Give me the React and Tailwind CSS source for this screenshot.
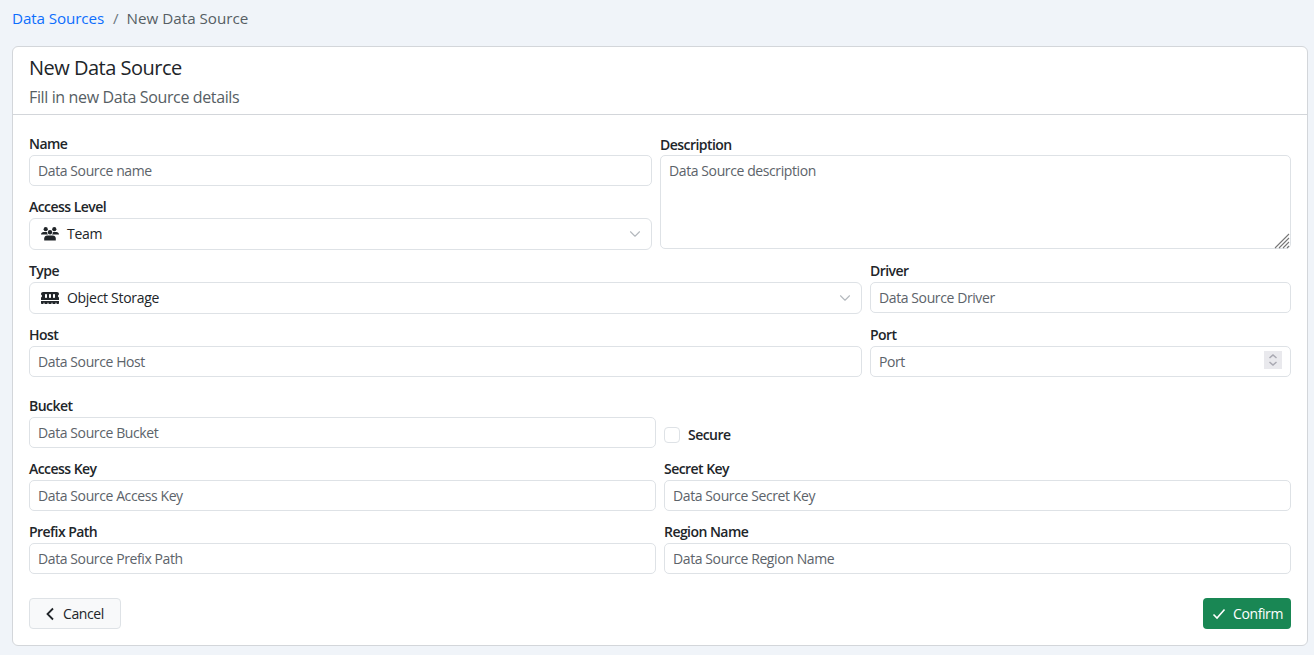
import React from 'react';
import { FaMemory } from 'react-icons/fa6';

const labelClass = 'block text-[14px] leading-[19px] pb-[2px] font-semibold text-[#212529] tracking-[-0.55px]';
const inputClass = 'block w-full h-[31px] border border-[#dee2e6] rounded-[5px] bg-white px-2 text-[14px] tracking-[-0.4px] text-[#212529] placeholder:text-[#5c636a] placeholder:opacity-100 outline-none';
const selectClass = 'relative flex items-center w-full h-[32px] border border-[#dee2e6] rounded-[6px] bg-white text-[14px] tracking-[-0.3px] text-[#212529]';

const Field = ({ label, placeholder, className = '' }) => (
  <div className={className}>
    <label className={labelClass}>{label}</label>
    <input type="text" placeholder={placeholder} className={inputClass} />
  </div>
);

const Chevron = () => (
  <svg className="absolute right-[10px] top-[9px]" width="12" height="12" viewBox="0 0 16 16" fill="none" stroke="#b4b9be" strokeWidth="1.5" strokeLinecap="round" strokeLinejoin="round">
    <path d="M2 5l6 6 6-6" />
  </svg>
);

const TeamIcon = () => (
  <svg width="18" height="14" viewBox="0 0 18 14" fill="currentColor">
    <circle cx="4.7" cy="2.2" r="2.1" />
    <circle cx="13.3" cy="2.2" r="2.1" />
    <circle cx="9" cy="5.2" r="2.2" />
    <path d="M0 7.5C0 5.8 1.2 4.9 2.6 4.9h3.2c.3 1 .7 1.8 1.2 2.6H0zM18 7.5c0-1.7-1.2-2.6-2.6-2.6h-3.2c-.3 1-.7 1.8-1.2 2.6H18z" />
    <path d="M3.2 13.6v-2c0-1.9 1.4-3.1 3-3.1h5.6c1.6 0 3 1.2 3 3.1v2H3.2z" />
  </svg>
);

const SelectField = ({ label, icon, value, className = '' }) => (
  <div className={className}>
    <label className={labelClass}>{label}</label>
    <div className={selectClass}>
      <span className="w-[37px] flex justify-center pl-[3px] -mt-[1px] text-[#212529]">{icon}</span>
      <span className="-mt-[2px]">{value}</span>
      <Chevron />
    </div>
  </div>
);

export default function App() {
  return (
    <div className="min-h-[655px] bg-[#f0f4f9] px-3 pb-[10px] font-['Open_Sans','Noto_Sans',sans-serif]">
      {/* Breadcrumb */}
      <div className="h-[46px] pt-[7px] text-[15.2px] leading-[22px] tracking-[-0.1px] flex gap-2">
        <a className="text-[#0d6efd]">Data Sources</a>
        <span className="text-[#6c757d] ml-px">/</span>
        <span className="text-[#565e64] tracking-[0px]">New Data Source</span>
      </div>

      <div className="bg-white border border-[#d3d6da] rounded-[6px] h-[600px] w-[1296px]">
        <div className="h-[68px] border-b border-[#d3d6da] px-4 pt-[8px]">
          <h5 className="text-[20px] leading-[26px] tracking-[-0.5px] text-[#212529]">New Data Source</h5>
          <p className="mt-[5px] text-[16px] leading-[22px] tracking-[-0.37px] text-[#565e64]">Fill in new Data Source details</p>
        </div>

        <form className="px-4 pt-[19px]">
          <div className="grid grid-cols-[623px_631px] gap-x-2">
            <div>
              <Field label="Name" placeholder="Data Source name" />
              <SelectField className="mt-[11px]" label="Access Level" value="Team" icon={<TeamIcon />} />
            </div>
            <div className="relative pt-px">
              <label className={labelClass}>Description</label>
              <textarea
                placeholder="Data Source description"
                className="block w-full h-[94px] -mt-px border border-[#dee2e6] rounded-[5px] bg-white px-2 py-[4px] text-[14px] tracking-[-0.4px] leading-[21px] placeholder:text-[#5c636a] placeholder:opacity-100 outline-none resize-none"
              />
              {/* resize handle */}
              <svg className="absolute right-[1px] bottom-[1px]" width="16" height="16" viewBox="0 0 16 16" stroke="#777777" strokeWidth="1.1">
                <path d="M1 15L15 1M5 15L15 5M9 15l6-6M13 15l2-2" />
              </svg>
            </div>
          </div>

          <div className="grid grid-cols-[833px_421px] gap-x-2 mt-[11px]">
            <SelectField label="Type" value="Object Storage" icon={<FaMemory size={18} />} />
            <Field label="Driver" placeholder="Data Source Driver" />
          </div>

          <div className="grid grid-cols-[833px_421px] gap-x-2 mt-[11px]">
            <Field label="Host" placeholder="Data Source Host" />
            <div className="relative">
              <Field label="Port" placeholder="Port" />
              <span className="absolute right-[9px] top-[26px] w-[18px] h-[18px] bg-[#e9e9ed] flex items-center justify-center">
                <svg width="12" height="14" viewBox="0 0 12 14" fill="none" stroke="#a9a9b2" strokeWidth="1.5">
                  <path d="M2.5 5L6 2l3.5 3M2.5 9L6 12l3.5-3" />
                </svg>
              </span>
            </div>
          </div>

          <div className="grid grid-cols-2 gap-x-2 mt-[19px]">
            <Field label="Bucket" placeholder="Data Source Bucket" />
            <div className="flex items-center gap-2 pt-[25px]">
              <input type="checkbox" className="appearance-none w-4 h-4 border border-[#dee2e6] rounded-[4px] bg-white" />
              <label className={`${labelClass} mt-px tracking-[-0.7px]`}>Secure</label>
            </div>
          </div>

          <div className="grid grid-cols-2 gap-x-2 mt-[11px]">
            <Field label="Access Key" placeholder="Data Source Access Key" />
            <Field label="Secret Key" placeholder="Data Source Secret Key" />
          </div>

          <div className="grid grid-cols-2 gap-x-2 mt-[11px]">
            <Field label="Prefix Path" placeholder="Data Source Prefix Path" />
            <Field label="Region Name" placeholder="Data Source Region Name" />
          </div>

          <div className="flex justify-between mt-[24px]">
            <button type="button" className="flex items-center h-[31px] w-[92px] pl-[15px] gap-[8px] bg-[#f8f9fa] border border-[#dee2e6] rounded-[4px] text-[14px] tracking-[-0.4px] text-[#212529]">
              <svg width="10" height="14" viewBox="0 0 10 14" fill="none" stroke="#212529" strokeWidth="1.8">
                <path d="M8 1.5L2.5 7 8 12.5" />
              </svg>
              Cancel
            </button>
            <button type="button" className="flex items-center h-[31px] w-[88px] pl-[9px] gap-[7px] bg-[#198754] rounded-[4px] text-[14px] tracking-[-0.4px] text-white">
              <svg width="14" height="12" viewBox="0 0 14 12" fill="none" stroke="#fff" strokeWidth="1.6">
                <path d="M1.5 6.5L5 10l7.5-8.5" />
              </svg>
              Confirm
            </button>
          </div>
        </form>
      </div>
    </div>
  );
}
